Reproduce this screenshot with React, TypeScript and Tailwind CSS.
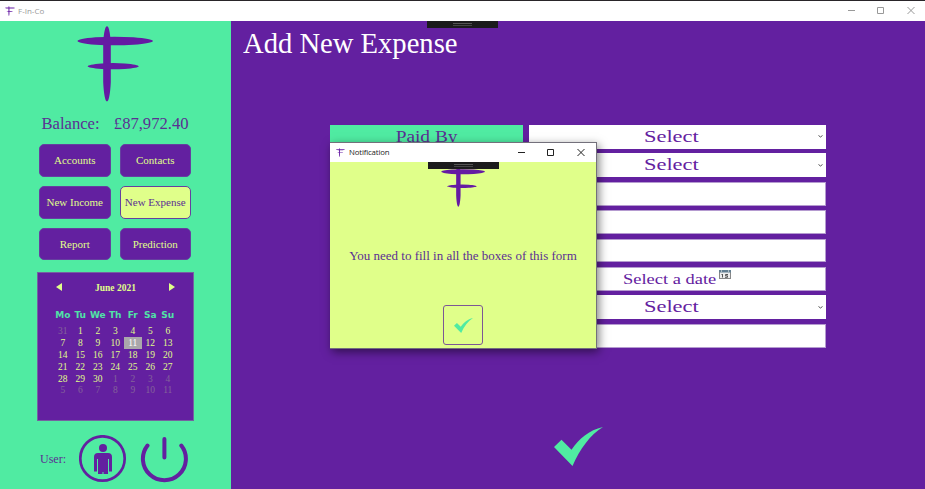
import React from "react";

const NAV = ["Accounts", "Contacts", "New Income", "New Expense", "Report", "Prediction"];
const DAY_NAMES = ["Mo", "Tu", "We", "Th", "Fr", "Sa", "Su"];
const DAYS = [31, ...Array.from({ length: 30 }, (_, i) => i + 1), ...Array.from({ length: 11 }, (_, i) => i + 1)];
const FIELDS = ["select", "select", "text", "text", "text", "date", "select", "text"];

function Logo({ className }: { className: string }) {
  return (
    <svg viewBox="0 0 76 76" className={className} fill="#651aa3">
      <path d="M30 .3c1.8 0 3.2 6 3.8 17v39c-.6 12-2 19.2-3.8 19.2s-3.200-7.200-3.800-19.200v-39c.6-11 2-17 3.800-17z" />
      <path d="M.5 15c0-1.300 6-2.800 18-3.800q19-1 38 0c12 1 19.500 2.500 19.500 3.800s-7.500 2.800-19.500 3.800q-19 1-38 0c-12-1-18-2.500-18-3.800z" />
      <path d="M10.700 40.200c0-1 5-2.200 14-2.800q11.500-.7 23 0c9 .6 14 1.800 14 2.800s-5 2.100-14 2.700q-11.500.7-23 0c-9-.6-14-1.700-14-2.700z" />
    </svg>
  );
}

function Tick({ className }: { className: string }) {
  return (
    <svg viewBox="0 0 49 39" preserveAspectRatio="none" className={className} fill="#50eba2">
      <path d="M0 20L7.500 12.700L17.500 22.700C25 12 35 3 49 0C36 8 26 22 18.500 39Z" />
    </svg>
  );
}

function WindowControls({ className }: { className: string }) {
  return (
    <svg viewBox="0 0 67 9" className={className} fill="none" stroke="currentColor">
      <path d="M0 4.500h7M29.500 1.500h6v6h-6zM59.500 1l7 7M66.500 1l-7 7" />
    </svg>
  );
}

function Grip() {
  return (
    <div className="flex h-[7px] w-[71px] flex-col items-center justify-center gap-px bg-[#1b1b1c]">
      <div className="h-px w-[19px] bg-[#555]" />
      <div className="h-px w-[19px] bg-[#444]" />
    </div>
  );
}

function Calendar() {
  return (
    <div className="ml-[37px] mt-3 h-[149px] w-[157px] border border-[#7661a0] bg-[#6320a0] text-[#e0ff8a]">
      <div className="mx-[18px] mt-[8px] flex h-3 items-center justify-between">
        <svg viewBox="0 0 6 8" className="h-2 w-1.5" fill="currentColor"><path d="M6 0v8L0 4z" /></svg>
        <span className="pt-px text-[9.500px] font-bold leading-3">June 2021</span>
        <svg viewBox="0 0 6 8" className="h-2 w-1.5" fill="currentColor"><path d="M0 0v8l6-4z" /></svg>
      </div>
      <div className="ml-4 mt-[16px] grid w-[122.500px] grid-cols-7 text-center font-['DejaVu_Sans'] text-[9px] font-bold leading-3 text-[#50e3a6]">
        {DAY_NAMES.map((d) => <span key={d}>{d}</span>)}
      </div>
      <div className="ml-4 mt-[4px] grid w-[122.500px] grid-cols-7 text-center text-[9.500px]">
        {DAYS.map((d, i) => (
          <span
            key={i}
            className={`h-[11.800px] pt-px leading-[11px] ${i === 11 ? "bg-[#aaa7ab] text-white" : i === 0 || i > 30 ? "text-[#84639a]" : ""}`}
          >
            {d}
          </span>
        ))}
      </div>
    </div>
  );
}

function Sidebar() {
  return (
    <aside className="h-[468px] w-[231px] shrink-0 bg-[#50eba2] text-[#5b3093]">
      <Logo className="ml-[77px] mt-[5px] h-[76px] w-[76px]" />
      <div className="ml-[41.500px] mt-[12px] flex h-5 w-[147px] justify-between text-[16.600px] leading-5">
        <span>Balance:</span>
        <span>£87,972.40</span>
      </div>
      <nav className="ml-[39px] mt-[10px] grid w-[152px] grid-cols-2 gap-x-[9px] gap-y-[9px]">
        {NAV.map((n) => (
          <button
            key={n}
            className={`h-[32.800px] whitespace-nowrap rounded-[5px] border border-[#6540a0] text-[11px] ${n === "New Expense" ? "bg-[#e0ff8a] text-[#5b3093]" : "bg-[#6320a0] text-[#e0ff8a]"}`}
          >
            {n}
          </button>
        ))}
      </nav>
      <Calendar />
      <div className="ml-10 mt-[14px] flex h-12 items-center">
        <span className="w-[39px] text-[12px]">User:</span>
        <svg viewBox="0 0 48 48" className="h-12 w-12" fill="#6320a0">
          <circle cx="23.500" cy="23.500" r="22.200" fill="none" stroke="#6320a0" strokeWidth="2.700" />
          <circle cx="24" cy="13" r="4" />
          <path d="M19 18h10q4 0 4 4v14.500h-3V24h-1v15h-4.500v-2h-1v2H19V24h-1v12.500h-3V22q0-4 4-4z" />
        </svg>
        <svg viewBox="0 0 48 48" className="ml-[13px] h-12 w-12" fill="none" stroke="#6320a0" strokeWidth="4" strokeLinecap="round">
          <path d="M24.400 4v18.500M7.500 10.500A21.500 21.500 0 1 0 41.300 10.500" />
        </svg>
      </div>
    </aside>
  );
}

function Field({ kind }: { kind: string }) {
  if (kind === "select") {
    return (
      <div className="flex h-[23.800px] items-center bg-white pl-[115px] pr-[3px] text-[#6320a0]">
        <span className="w-10 origin-left scale-x-[1.400] text-[16px] leading-5">Select</span>
        <svg viewBox="0 0 5 3" className="ml-auto h-[3px] w-[5px]" fill="none" stroke="#555"><path d="M.5.500l2 1.500 2-1.500" /></svg>
      </div>
    );
  }
  return (
    <div className="flex h-[23.800px] items-center border border-[#b59bd0] bg-white text-[#6320a0]">
      {kind === "date" && (
        <>
          <span className="ml-[93px] w-[95px] whitespace-nowrap text-[15.500px] leading-5">
            <span className="inline-block origin-left scale-x-[1.190]">Select a date</span>
          </span>
          <svg viewBox="0 0 12 9" className="mb-2 ml-[0.500px] h-[9px] w-3">
            <rect x=".5" y=".5" width="11" height="8" fill="#eee" stroke="#888" />
            <path d="M0 0h12v2.500H0z" fill="#637f92" />
            <path d="M2 1h1M9 1h1" stroke="#fff" />
            <path d="M3.500 4v3.500M2.500 4.500h1M9 4.500H6.500v1.300H8.500v1.500H6" fill="none" stroke="#555" />
          </svg>
        </>
      )}
    </div>
  );
}

function Notification() {
  return (
    <section className="absolute left-[330px] top-[142px] h-[207px] w-[267px] border border-l-0 border-[#73707b] bg-[#e0ff8a] shadow-[2px_3px_9px_rgba(0,0,0,0.5)]">
      <header className="flex h-[19px] items-center bg-white pl-[6px] text-[#222]">
        <Logo className="h-[9px] w-[9px]" />
        <span className="ml-[4px] font-['Open_Sans'] text-[7.800px] tracking-[-0.15px]">Notification</span>
        <WindowControls className="ml-auto mr-[11px] h-[9px] w-[67px]" />
      </header>
      <div className="flex flex-col items-center">
        <div className="z-10"><Grip /></div>
        <Logo className="mt-[-6px] h-[44px] w-[44px]" />
        <p className="mt-[39px] whitespace-nowrap text-[13px] leading-5 text-[#5b3093]">You need to fill in all the boxes of this form</p>
        <button className="mt-[39px] flex h-10 w-10 items-center justify-center rounded-[3px] border border-[#7c5795]">
          <Tick className="h-[15px] w-[19px]" />
        </button>
      </div>
    </section>
  );
}

export default function App() {
  return (
    <div className="relative h-[489px] w-[925px] overflow-hidden bg-[#6320a0] font-['Liberation_Serif',serif]">
      <header className="flex h-[21px] items-center border-t border-[#292529] bg-white pl-[5px] text-[#999]">
        <Logo className="h-[10px] w-[10px]" />
        <span className="ml-[3px] font-['Open_Sans'] text-[8px]">F-In-Co</span>
        <WindowControls className="mb-px ml-auto mr-[10px] h-[9px] w-[67px]" />
      </header>
      <div className="flex">
        <Sidebar />
        <main className="flex w-[694px] flex-col">
          <div className="ml-[196px] h-[7px]"><Grip /></div>
          <h1 className="ml-[12px] mt-[-3px] h-9 origin-left scale-x-[0.980] whitespace-nowrap text-[29.200px] leading-9 text-white">Add New Expense</h1>
          <div className="ml-[99px] mt-[64px] flex gap-[6.500px]">
            <div className="flex h-6 w-[192.500px] items-center justify-center bg-[#50eba2] text-[16px] leading-5 text-[#5b3093]">
              <span className="scale-x-[1.210]">Paid By</span>
            </div>
            <div className="flex w-[297px] flex-col gap-[4.600px]">
              {FIELDS.map((kind, i) => <Field key={i} kind={kind} />)}
            </div>
          </div>
          <Tick className="ml-[323px] mt-[79px] h-[39px] w-[49px]" />
        </main>
      </div>
      <Notification />
    </div>
  );
}
